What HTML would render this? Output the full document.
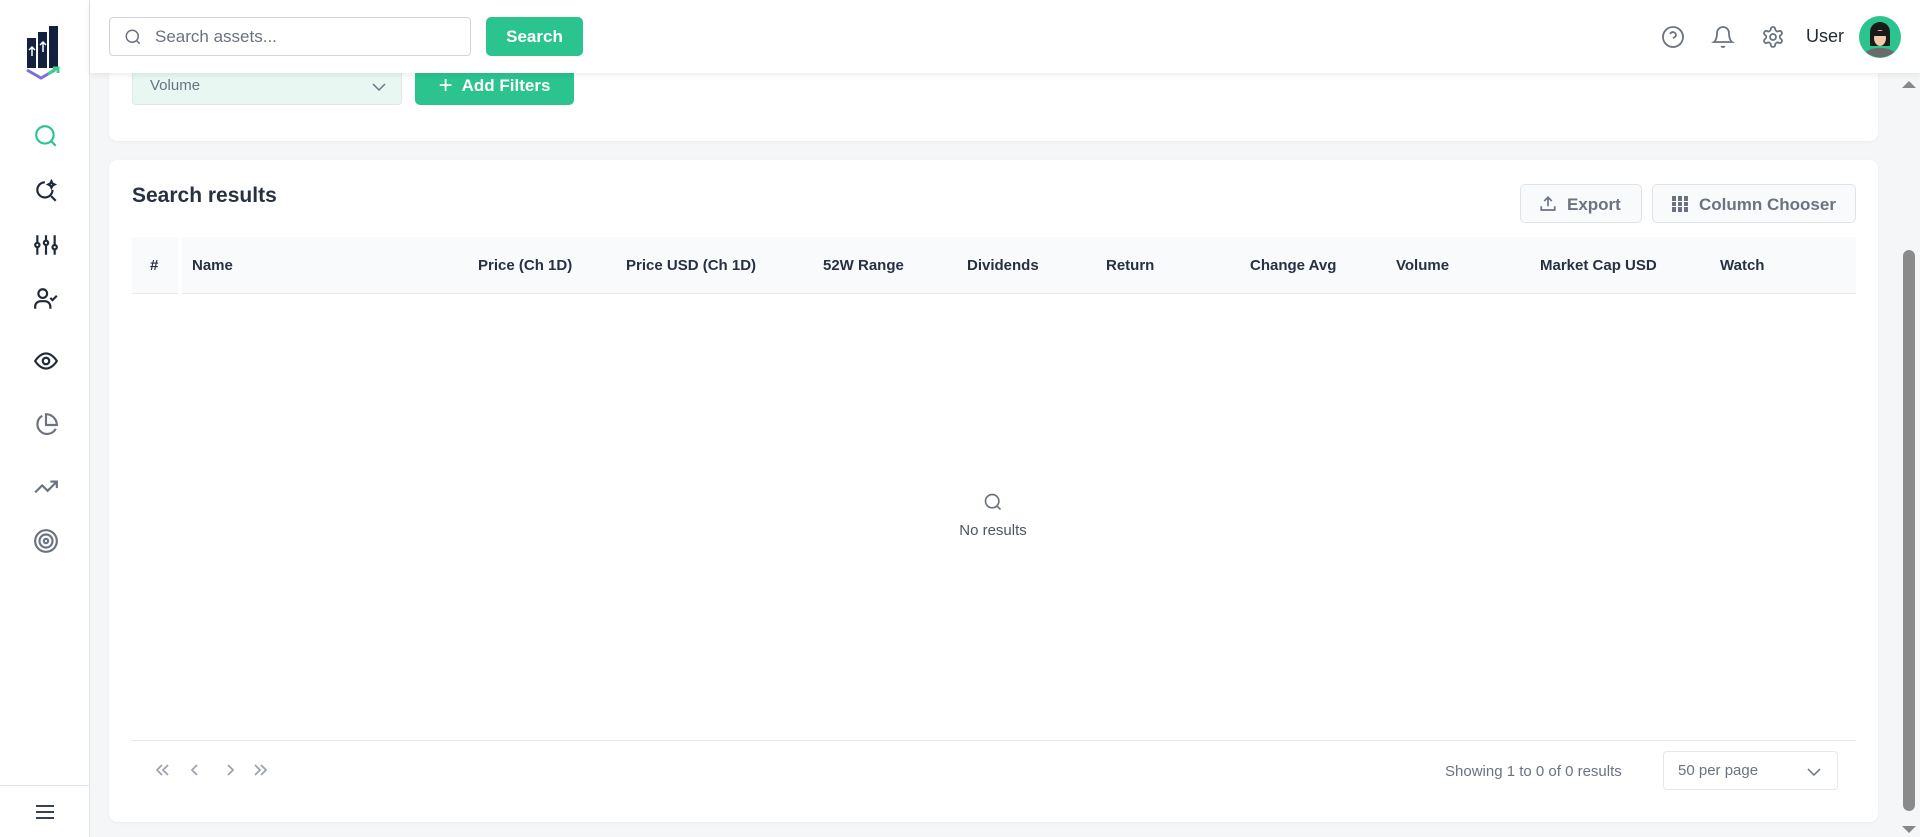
<!DOCTYPE html>
<html><head><meta charset="utf-8"><style>
*{box-sizing:border-box;margin:0;padding:0}
body{width:1920px;height:837px;overflow:hidden;background:#f4f6f8;font-family:"Liberation Sans",sans-serif;position:relative;color:#1f2937}
.abs{position:absolute}
.side{left:0;top:0;width:90px;height:837px;background:#fff;border-right:1px solid #e2e5ea}
.top{left:90px;top:0;width:1830px;height:73px;background:#fff;box-shadow:0 2px 6px rgba(0,0,0,.08);z-index:5}
.card{background:#fff;border-radius:8px;box-shadow:0 1px 3px rgba(0,0,0,.05)}
.btn{background:#2bc48f;color:#fff;font-weight:bold;border-radius:5px;display:flex;align-items:center;justify-content:center}
.th{top:237px;height:57px;line-height:57px;font-size:15px;font-weight:bold;color:#273142}
svg{display:block}
</style></head><body>
<div class="abs side">
 <svg class="abs" style="left:26px;top:26px" width="36" height="56" viewBox="0 0 36 56">
  <rect x="1" y="12" width="9" height="30" fill="#13213f"/><rect x="12" y="6" width="9" height="36" fill="#13213f"/><rect x="23" y="0" width="9" height="42" fill="#13213f"/>
  <path d="M6 30v-9M3 24l3-3 3 3M17 26v-10M14 19l3-3 3 3" stroke="#fff" stroke-width="1.5" fill="none"/>
  <path d="M1 44l14 8 14-8" stroke="#7b6fe0" stroke-width="3" fill="none"/><path d="M22 48l9-6M27 42h5v5" stroke="#3ccf91" stroke-width="3" fill="none"/>
 </svg>
 <svg class="abs" style="left:33px;top:123px" width="26" height="26" viewBox="0 0 24 24" fill="none" stroke="#2bc48f" stroke-width="2"><circle cx="11" cy="11" r="8"/><path d="M21 21l-4.3-4.3"/></svg>
 <svg class="abs" style="left:33px;top:178px" width="26" height="26" viewBox="0 0 24 24" fill="none" stroke="#1f2937" stroke-width="2"><path d="M18 11a7 7 0 1 1-7-7"/><path d="M21 21l-4.3-4.3"/><path d="M17 3l1 2 2 1-2 1-1 2-1-2-2-1 2-1z"/></svg>
 <svg class="abs" style="left:33px;top:232px" width="26" height="26" viewBox="0 0 24 24" fill="none" stroke="#1f2937" stroke-width="2"><path d="M4 21v-7M4 10V3M12 21v-9M12 8V3M20 21v-5M20 12V3"/><circle cx="4" cy="12" r="2"/><circle cx="12" cy="10" r="2"/><circle cx="20" cy="14" r="2"/></svg>
 <svg class="abs" style="left:33px;top:286px" width="26" height="26" viewBox="0 0 24 24" fill="none" stroke="#1f2937" stroke-width="2"><circle cx="9" cy="7" r="4"/><path d="M2 21v-2a5 5 0 0 1 5-5h4a5 5 0 0 1 5 5v2M16 11l2 2 4-4"/></svg>
 <svg class="abs" style="left:33px;top:348px" width="26" height="26" viewBox="0 0 24 24" fill="none" stroke="#1f2937" stroke-width="2"><path d="M2 12s4-7 10-7 10 7 10 7-4 7-10 7S2 12 2 12z"/><circle cx="12" cy="12" r="3"/></svg>
 <svg class="abs" style="left:33px;top:412px" width="26" height="26" viewBox="0 0 24 24" fill="none" stroke="#6b7280" stroke-width="2"><path d="M21 15.5A9 9 0 1 1 8.5 3.5"/><path d="M22 12A10 10 0 0 0 12 2v10z"/></svg>
 <svg class="abs" style="left:33px;top:474px" width="26" height="26" viewBox="0 0 24 24" fill="none" stroke="#6b7280" stroke-width="2"><path d="M22 7l-8.5 8.5-5-5L2 17M16 7h6v6"/></svg>
 <svg class="abs" style="left:33px;top:528px" width="26" height="26" viewBox="0 0 24 24" fill="none" stroke="#6b7280" stroke-width="2"><circle cx="12" cy="12" r="10"/><circle cx="12" cy="12" r="6"/><circle cx="12" cy="12" r="2"/></svg>
 <div class="abs" style="left:0;top:785px;width:89px;border-top:1px solid #e2e5ea"></div>
 <svg class="abs" style="left:34px;top:803px" width="22" height="18" viewBox="0 0 22 18" stroke="#374151" stroke-width="2"><path d="M2 3h18M2 9h18M2 15h18"/></svg>
</div>
<div class="abs top">
 <div class="abs" style="left:19px;top:17px;width:362px;height:39px;border:1px solid #d1d5db;border-radius:4px">
  <svg class="abs" style="left:14px;top:10px" width="18" height="18" viewBox="0 0 24 24" fill="none" stroke="#6b7280" stroke-width="2"><circle cx="11" cy="11" r="8"/><path d="M21 21l-4.3-4.3"/></svg>
  <span class="abs" style="left:45px;top:9px;font-size:17px;color:#6b7280">Search assets...</span>
 </div>
 <div class="abs btn" style="left:396px;top:17px;width:97px;height:39px;font-size:17px">Search</div>
 <svg class="abs" style="left:1571px;top:25px" width="24" height="24" viewBox="0 0 24 24" fill="none" stroke="#6b7280" stroke-width="1.8"><circle cx="12" cy="12" r="10"/><path d="M9.1 9a3 3 0 0 1 5.8 1c0 2-3 3-3 3M12 17h.01"/></svg>
 <svg class="abs" style="left:1621px;top:25px" width="24" height="24" viewBox="0 0 24 24" fill="none" stroke="#6b7280" stroke-width="1.8"><path d="M6 8a6 6 0 0 1 12 0c0 7 3 9 3 9H3s3-2 3-9M10.3 21a1.9 1.9 0 0 0 3.4 0"/></svg>
 <svg class="abs" style="left:1671px;top:25px" width="24" height="24" viewBox="0 0 24 24" fill="none" stroke="#6b7280" stroke-width="1.8"><circle cx="12" cy="12" r="3"/><path d="M12.2 2h-.4a2 2 0 0 0-2 2v.2a2 2 0 0 1-1 1.7l-.4.3a2 2 0 0 1-2 0l-.2-.1a2 2 0 0 0-2.7.7l-.2.4a2 2 0 0 0 .7 2.7l.2.1a2 2 0 0 1 1 1.7v.5a2 2 0 0 1-1 1.7l-.2.1a2 2 0 0 0-.7 2.7l.2.4a2 2 0 0 0 2.7.7l.2-.1a2 2 0 0 1 2 0l.4.3a2 2 0 0 1 1 1.7v.2a2 2 0 0 0 2 2h.4a2 2 0 0 0 2-2v-.2a2 2 0 0 1 1-1.7l.4-.3a2 2 0 0 1 2 0l.2.1a2 2 0 0 0 2.7-.7l.2-.4a2 2 0 0 0-.7-2.7l-.2-.1a2 2 0 0 1-1-1.7v-.5a2 2 0 0 1 1-1.7l.2-.1a2 2 0 0 0 .7-2.7l-.2-.4a2 2 0 0 0-2.7-.7l-.2.1a2 2 0 0 1-2 0l-.4-.3a2 2 0 0 1-1-1.7V4a2 2 0 0 0-2-2z"/></svg>
 <span class="abs" style="left:1716px;top:26px;font-size:18px;color:#1f2937">User</span>
 <svg class="abs" style="left:1769px;top:16px" width="42" height="42" viewBox="0 0 42 42"><circle cx="21" cy="21" r="21" fill="#2bc48f"/><path d="M11 30V16a10 10 0 0 1 20 0v14z" fill="#1a1a1a"/><ellipse cx="21" cy="22" rx="6" ry="8" fill="#f1c9a5"/><path d="M14 15h14v5H14z" fill="#1a1a1a"/><path d="M7 36a16 8 0 0 1 28 0 21 21 0 0 1-28 0z" fill="#6b6b6b"/></svg>
</div>
<div class="abs card" style="left:109px;top:40px;width:1769px;height:101px">
 <div class="abs" style="left:23px;top:26px;width:270px;height:39px;background:#e8f7f1;border:1px solid #dfe8e5;border-radius:4px">
  <span class="abs" style="left:17px;top:10px;font-size:15px;color:#6b7280">Volume</span>
  <svg class="abs" style="left:238px;top:12px" width="16" height="16" viewBox="0 0 16 16" fill="none" stroke="#6b7280" stroke-width="1.5"><path d="M2 5l6 6 6-6"/></svg>
 </div>
 <div class="abs btn" style="left:306px;top:26px;width:159px;height:39px;font-size:17px"><span style="font-size:24px;font-weight:normal;margin-right:9px;line-height:1">+</span>Add Filters</div>
</div>
<div class="abs card" style="left:109px;top:160px;width:1769px;height:662px">
 <div class="abs" style="left:23px;top:24px;font-size:21px;font-weight:bold;color:#273142">Search results</div>
 <div class="abs" style="left:1411px;top:24px;width:122px;height:39px;border:1px solid #dfe3e8;border-radius:5px;background:#f8fafc;color:#6b7280;font-size:17px;font-weight:bold">
  <svg class="abs" style="left:18px;top:10px" width="18" height="18" viewBox="0 0 24 24" fill="none" stroke="#6b7280" stroke-width="2.2"><path d="M3 15v5h18v-5M12 3v12M7 8l5-5 5 5"/></svg>
  <span class="abs" style="left:46px;top:10px">Export</span></div>
 <div class="abs" style="left:1543px;top:24px;width:204px;height:39px;border:1px solid #dfe3e8;border-radius:5px;background:#f8fafc;color:#6b7280;font-size:17px;font-weight:bold">
  <svg class="abs" style="left:19px;top:11px" width="16" height="16" viewBox="0 0 16 16" fill="#6b7280"><rect x="0" y="0" width="4" height="16"/><rect x="6" y="0" width="4" height="16"/><rect x="12" y="0" width="4" height="16"/><path d="M0 5h16v1H0zM0 10h16v1H0z" fill="#f8fafc"/></svg>
  <span class="abs" style="left:46px;top:10px">Column Chooser</span></div>
</div>
<div class="abs" style="left:132px;top:237px;width:1724px;height:57px;background:#f8fafc;border-bottom:1px solid #e5e7eb"></div>
<div class="abs" style="left:178px;top:237px;width:4px;height:57px;background:#fff"></div>
<div class="abs th" style="left:150px">#</div>
<div class="abs th" style="left:192px">Name</div>
<div class="abs th" style="left:478px">Price (Ch 1D)</div>
<div class="abs th" style="left:626px">Price USD (Ch 1D)</div>
<div class="abs th" style="left:823px">52W Range</div>
<div class="abs th" style="left:967px">Dividends</div>
<div class="abs th" style="left:1106px">Return</div>
<div class="abs th" style="left:1250px">Change Avg</div>
<div class="abs th" style="left:1396px">Volume</div>
<div class="abs th" style="left:1540px">Market Cap USD</div>
<div class="abs th" style="left:1720px">Watch</div>
<svg class="abs" style="left:983px;top:492px" width="20" height="20" viewBox="0 0 24 24" fill="none" stroke="#6b7280" stroke-width="2"><circle cx="11" cy="11" r="8"/><path d="M21 21l-4.3-4.3"/></svg>
<div class="abs" style="left:943px;top:522px;width:100px;text-align:center;font-size:15px;color:#4b5563">No results</div>
<div class="abs" style="left:132px;top:740px;width:1724px;border-top:1px solid #e5e7eb"></div>
<svg class="abs" style="left:155px;top:762px" width="120" height="16" viewBox="0 0 120 16" fill="none" stroke="#9ca3af" stroke-width="1.8"><path d="M7 3L2 8l5 5M13 3L8 8l5 5M42 3l-5 5 5 5M73 3l5 5-5 5M100 3l5 5-5 5M106 3l5 5-5 5"/></svg>
<div class="abs" style="left:1445px;top:763px;font-size:15px;color:#6b7280">Showing 1 to 0 of 0 results</div>
<div class="abs" style="left:1663px;top:751px;width:175px;height:39px;border:1px solid #e5e7eb;border-radius:4px;background:#fff">
 <span class="abs" style="left:14px;top:10px;font-size:15px;color:#6b7280">50 per page</span>
 <svg class="abs" style="left:142px;top:12px" width="16" height="16" viewBox="0 0 16 16" fill="none" stroke="#6b7280" stroke-width="1.5"><path d="M2 5l6 6 6-6"/></svg>
</div>
<div class="abs" style="left:1898px;top:73px;width:22px;height:764px;background:#f4f6f8"></div>
<div class="abs" style="left:1903px;top:250px;width:12px;height:561px;background:#8a8a8a;border-radius:6px"></div>
<div class="abs" style="left:1902px;top:81px;border-left:7px solid transparent;border-right:7px solid transparent;border-bottom:7px solid #888"></div>
<div class="abs" style="left:1902px;top:826px;border-left:7px solid transparent;border-right:7px solid transparent;border-top:7px solid #888"></div>
</body></html>
